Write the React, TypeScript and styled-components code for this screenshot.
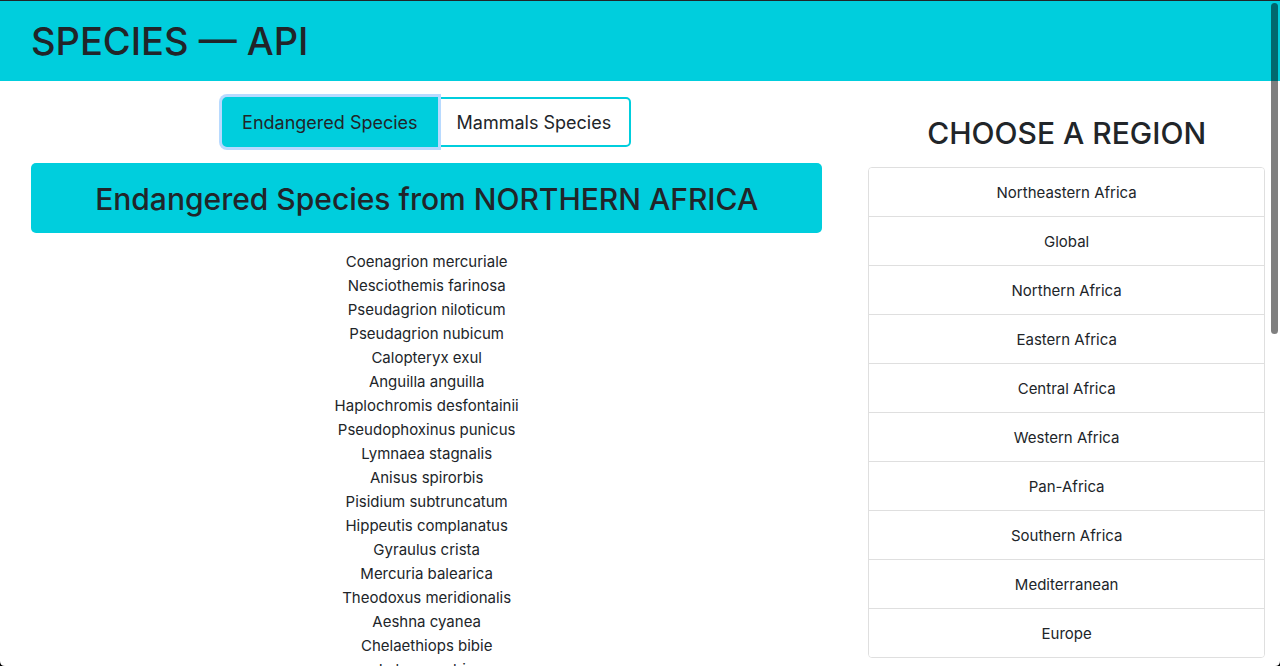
import React, { useState } from 'react';
import styled, { createGlobalStyle } from 'styled-components';

const accent = '#00cedd';
const ink = '#212529';
const line = '#dfdfdf';

const GlobalStyle = createGlobalStyle`
  *, *::before, *::after { box-sizing: border-box; }
  body {
    margin: 0;
    background: #fff;
    color: ${ink};
    font-family: Inter, "Liberation Sans", sans-serif;
    font-size: 15px;
    line-height: 24px;
  }
`;

const Shell = styled.div`
  position: relative;
  height: 100vh;
  overflow-y: auto;
  scrollbar-width: none;
`;

const Header = styled.header`
  padding: 16px 31px;
  border-top: 1px solid ${ink};
  background: ${accent};
`;

const Title = styled.h1`
  margin: 0;
  font-size: 38px;
  font-weight: 500;
  line-height: 48px;
`;

const Columns = styled.main`
  display: grid;
  grid-template-columns: 2fr 1fr;
`;

const Results = styled.section`
  display: flex;
  flex-direction: column;
  align-items: center;
  gap: 16px;
  padding: 16px 31px;
`;

const Tabs = styled.div`
  display: inline-flex;
`;

const TabButton = styled.button<{ $active: boolean }>`
  position: relative;
  z-index: ${({ $active }) => ($active ? 1 : 0)};
  padding: 9px 18px 7px;
  border: 2px solid ${accent};
  background: ${({ $active }) => ($active ? accent : '#fff')};
  color: ${ink};
  font: inherit;
  font-size: 18px;
  line-height: 30px;
  cursor: pointer;
  box-shadow: ${({ $active }) => ($active ? '0 0 0 3px #b8daff' : 'none')};

  &:first-child { border-radius: 5px 0 0 5px; }
  &:last-child { margin-left: -1px; border-radius: 0 5px 5px 0; }
`;

const Banner = styled.h2`
  align-self: stretch;
  margin: 0;
  padding: 17px 16px 15px;
  border-radius: 5px;
  background: ${accent};
  font-size: 30px;
  font-weight: 500;
  line-height: 38px;
  text-align: center;
`;

const SpeciesList = styled.ul`
  margin: 0;
  padding: 1px 0 0;
  list-style: none;
  text-align: center;
`;

const Regions = styled.aside`
  padding: 32px 15px 8px;
  text-align: center;
`;

const RegionsTitle = styled.h2`
  margin: 0 0 14px;
  font-size: 30px;
  font-weight: 500;
  line-height: 40px;
`;

const RegionList = styled.div`
  display: flex;
  flex-direction: column;
  border: 1px solid ${line};
  border-radius: 4px;
  overflow: hidden;
`;

const RegionButton = styled.button`
  padding: 13px 20px 11px;
  border: 0;
  background: #fff;
  color: inherit;
  font: inherit;
  cursor: pointer;

  & + & { border-top: 1px solid ${line}; }
`;

const ScrollThumb = styled.div`
  position: fixed;
  z-index: 2;
  top: 3px;
  right: 2px;
  width: 7px;
  height: 331px;
  border-radius: 4px;
  background: rgba(0, 0, 0, 0.5);
`;

const WindowCorner = styled.svg<{ $side: 'left' | 'right' }>`
  position: fixed;
  bottom: 0;
  ${({ $side }) => $side}: 0;
  width: 5px;
  height: 5px;
  transform: ${({ $side }) => ($side === 'right' ? 'scaleX(-1)' : 'none')};
`;

const species = [
  'Coenagrion mercuriale',
  'Nesciothemis farinosa',
  'Pseudagrion niloticum',
  'Pseudagrion nubicum',
  'Calopteryx exul',
  'Anguilla anguilla',
  'Haplochromis desfontainii',
  'Pseudophoxinus punicus',
  'Lymnaea stagnalis',
  'Anisus spirorbis',
  'Pisidium subtruncatum',
  'Hippeutis complanatus',
  'Gyraulus crista',
  'Mercuria balearica',
  'Theodoxus meridionalis',
  'Aeshna cyanea',
  'Chelaethiops bibie',
  'Labeo coubie',
];

const regions = [
  'Northeastern Africa',
  'Global',
  'Northern Africa',
  'Eastern Africa',
  'Central Africa',
  'Western Africa',
  'Pan-Africa',
  'Southern Africa',
  'Mediterranean',
  'Europe',
];

const tabs = ['Endangered Species', 'Mammals Species'];

export default function App() {
  const [tab, setTab] = useState(tabs[0]);
  const [region, setRegion] = useState('Northern Africa');

  return (
    <Shell>
      <GlobalStyle />
      <Header>
        <Title>SPECIES — API</Title>
      </Header>
      <Columns>
        <Results>
          <Tabs>
            {tabs.map((name) => (
              <TabButton
                key={name}
                type="button"
                aria-pressed={name === tab}
                $active={name === tab}
                onClick={() => setTab(name)}
              >
                {name}
              </TabButton>
            ))}
          </Tabs>
          <Banner>{`${tab} from ${region.toUpperCase()}`}</Banner>
          <SpeciesList>
            {species.map((name) => (
              <li key={name}>{name}</li>
            ))}
          </SpeciesList>
        </Results>
        <Regions>
          <RegionsTitle>CHOOSE A REGION</RegionsTitle>
          <RegionList>
            {regions.map((name) => (
              <RegionButton key={name} type="button" onClick={() => setRegion(name)}>
                {name}
              </RegionButton>
            ))}
          </RegionList>
        </Regions>
      </Columns>
      <ScrollThumb />
      <WindowCorner $side="left" viewBox="0 0 5 5" aria-hidden="true">
        <path d="M0 0Q0 5 5 5H0Z" fill="#000" />
      </WindowCorner>
      <WindowCorner $side="right" viewBox="0 0 5 5" aria-hidden="true">
        <path d="M0 0Q0 5 5 5H0Z" fill="#000" />
      </WindowCorner>
    </Shell>
  );
}
